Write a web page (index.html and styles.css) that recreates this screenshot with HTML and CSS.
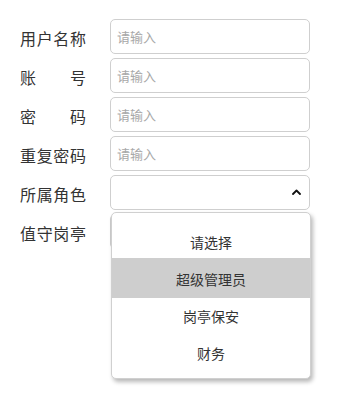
FILE: index.html
```html
<!DOCTYPE html>
<html lang="zh-CN">
<head>
<meta charset="utf-8">
<title>表单</title>
<link rel="stylesheet" href="styles.css">
</head>
<body>
<form class="form">
  <div class="row">
    <label class="label">用户名称</label>
    <input class="field" type="text" placeholder="请输入">
  </div>
  <div class="row">
    <label class="label">账号</label>
    <input class="field" type="text" placeholder="请输入">
  </div>
  <div class="row">
    <label class="label">密码</label>
    <input class="field" type="password" placeholder="请输入">
  </div>
  <div class="row">
    <label class="label">重复密码</label>
    <input class="field" type="password" placeholder="请输入">
  </div>
  <div class="row row-select">
    <label class="label">所属角色</label>
    <div class="field select">
      <svg class="caret" width="9" height="6" viewBox="0 0 9 6"><polyline points="1,5 4.5,1.5 8,5" fill="none" stroke="#111" stroke-width="1.8" stroke-linecap="round" stroke-linejoin="round"/></svg>
    </div>
    <ul class="menu">
      <li class="option">请选择</li>
      <li class="option active">超级管理员</li>
      <li class="option">岗亭保安</li>
      <li class="option">财务</li>
    </ul>
  </div>
  <div class="row">
    <label class="label">值守岗亭</label>
    <div class="field select"></div>
  </div>
</form>
</body>
</html>
```
FILE: styles.css
```css
html, body {
  margin: 0;
  padding: 0;
  background: #ffffff;
  min-height: 403px;
}
body {
  font-family: "Noto Sans CJK SC", "Noto Sans", sans-serif;
  color: #333333;
}
.form {
  display: flex;
  flex-direction: column;
  gap: 4px;
  padding: 19px 0 0 20px;
  min-height: 384px;
}
.row {
  display: flex;
  align-items: center;
  height: 35px;
}
.row-select {
  position: relative;
  z-index: 2;
}
.label {
  width: 66px;
  margin-right: 24px;
  font-size: 16px;
  line-height: 20px;
  padding-top: 3px;
  text-align: justify;
  text-align-last: justify;
  color: #333333;
}
.field {
  box-sizing: border-box;
  width: 200px;
  height: 35px;
  border: 1px solid #cfcfcf;
  border-radius: 5px;
  background: #ffffff;
  padding: 0 0 0 6px;
  margin: 0;
  font-family: "Noto Sans CJK SC", "Noto Sans", sans-serif;
  font-size: 13px;
  color: #333333;
  outline: none;
}
.field::placeholder {
  color: #a8a8a8;
}
.select {
  display: flex;
  align-items: center;
  justify-content: flex-end;
  padding-right: 8px;
}
.caret {
  display: block;
  margin-top: -1px;
}
.menu {
  position: absolute;
  left: 91px;
  top: 37px;
  z-index: 2;
  box-sizing: border-box;
  width: 200px;
  margin: 0;
  padding: 11px 0 6px;
  list-style: none;
  background: #ffffff;
  border: 1px solid #d0d0d0;
  border-radius: 5px;
  box-shadow: 2px 3px 4px rgba(0, 0, 0, 0.28);
}
.option {
  height: 37px;
  line-height: 37px;
  text-align: center;
  font-size: 14px;
  color: #333333;
}
.option.active {
  background: #cecece;
  margin-top: -3px;
  padding-top: 3px;
}
```
